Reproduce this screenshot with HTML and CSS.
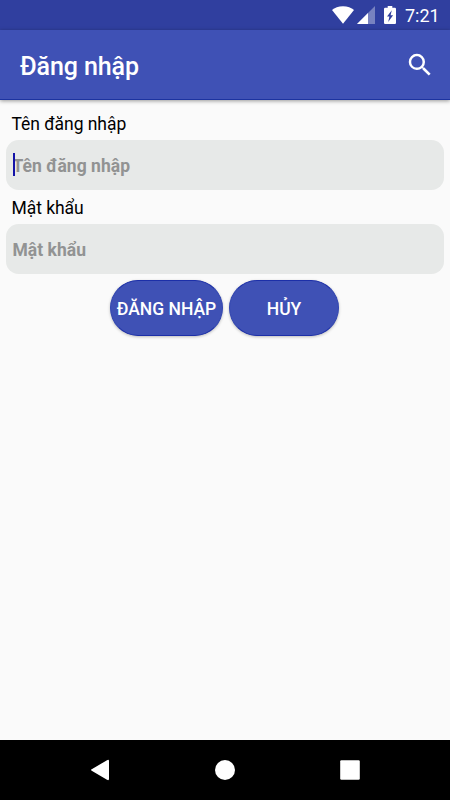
FILE: index.html
```html
<!DOCTYPE html>
<html lang="vi">
<head>
  <meta charset="UTF-8">
  <title>Đăng nhập</title>
  <meta name="viewport" content="width=device-width, initial-scale=1.0">
  <link rel="stylesheet" href="styles.css">
</head>
<body>
  <div class="status-bar">
    <svg class="wifi" width="22" height="18" viewBox="0 0 22 18"><path d="M11 17.8L0 4.1C2.6 1.8 6.500 .3 11 .3s8.400 1.500 11 3.800z" fill="#fff"/></svg>
    <svg class="signal" width="18" height="18" viewBox="0 0 18 18"><path d="M0 18L18 0v18z" fill="#fff" opacity=".35"/><path d="M0 18L11 7v11z" fill="#fff"/></svg>
    <svg class="battery" width="12" height="18" viewBox="0 0 12 18"><path d="M3.700 0h4.600v1.800h2.600q1.100 0 1.100 1.100v14q0 1.100-1.100 1.100H1.100Q0 18 0 16.900v-14q0-1.100 1.100-1.100h2.600z" fill="#fff"/><path d="M7.800 4.300L3 10.600h2.400l-1.200 5.300 4.900-6.600H6.600z" fill="#303f9f"/></svg>
    <span class="time">7:21</span>
  </div>

  <header class="toolbar">
    <h1>Đăng nhập</h1>
    <svg width="30" height="30" viewBox="0 0 24 24"><path fill="#fff" d="M15.500 14h-.79l-.28-.27A6.471 6.471 0 0 0 16 9.500 6.500 6.500 0 1 0 9.500 16c1.610 0 3.090-.59 4.230-1.570l.27.28v.79l5 4.990L20.490 19l-4.990-5zm-6 0C7.010 14 5 11.990 5 9.500S7.010 5 9.500 5 14 7.010 14 9.500 11.990 14 9.500 14z"/></svg>
  </header>

  <form class="login">
    <label for="user">Tên đăng nhập</label>
    <div class="field focused"><input type="text" id="user" placeholder="Tên đăng nhập"></div>
    <label for="pass">Mật khẩu</label>
    <div class="field"><input type="password" id="pass" placeholder="Mật khẩu"></div>
    <div class="buttons">
      <button type="button" class="submit">ĐĂNG NHẬP</button>
      <button type="button" class="cancel">HỦY</button>
    </div>
  </form>

  <nav class="nav-bar">
    <svg width="20" height="22" viewBox="0 0 20 22"><path d="M1.700 10.300L17 1.200q2-1 2 .8v18q0 1.800-2 .8L1.700 11.700q-1.400-.7 0-1.400z" fill="#fff"/></svg>
    <svg width="20" height="20" viewBox="0 0 20 20"><circle cx="10" cy="10" r="10" fill="#fff"/></svg>
    <svg width="20" height="20" viewBox="0 0 20 20"><rect x=".2" y=".2" width="19.600" height="19.600" rx="1.200" fill="#fff"/></svg>
  </nav>
</body>
</html>
```
FILE: styles.css
```css
* { box-sizing: border-box; }
body {
  margin: 0; height: 100vh; background: #fafafa; color: #000;
  font-family: Roboto, sans-serif; font-size: 17.5px;
  display: flex; flex-direction: column; overflow: hidden;
}
svg { display: block; flex: none; }
.status-bar {
  height: 30px; background: #303f9f; color: #fff;
  display: flex; align-items: flex-start; justify-content: flex-end;
  padding: 6px 10px 0 0;
}
.signal { margin-left: 3px; }
.battery { margin-left: 9px; }
.time { width: 35px; margin-left: 9px; font-size: 18px; line-height: 20px; white-space: nowrap; }
.toolbar {
  height: 70px; background: #3f51b5; color: #fff;
  border-bottom: 1px solid #1c33a0;
  box-shadow: 0 1px 4px rgba(0,0,0,0.4);
  display: flex; align-items: center; justify-content: space-between;
  padding: 1px 15px 0 20px;
}
h1 { margin: 0; padding-top: 4px; font-size: 25px; font-weight: 500; line-height: 30px; letter-spacing: -0.1px; }
.login { flex: 1; padding: 6px; }
label { display: block; height: 34px; line-height: 36px; padding-left: 5.5px; letter-spacing: -0.05px; }
.field {
  position: relative; height: 50px; background: #e7e9e8;
  border-radius: 12.5px;
}
.field input {
  width: 100%; height: 100%; padding: 1px 6px 0 6.5px; border: 0; outline: 0;
  background: none; font: bold 17.5px Roboto, sans-serif; letter-spacing: 0.04px;
}
.field input::placeholder { color: #929393; opacity: 1; }
/* text cursor */
.focused::before {
  content: ""; position: absolute; left: 7px; top: 13px;
  width: 2px; height: 23px; background: #1413a8;
}
.buttons { display: flex; justify-content: center; gap: 6px; margin-top: 6px; padding-right: 1px; }
button {
  height: 56px; padding: 1px 0 0; border: 1px solid #1c2fa8; border-radius: 28px;
  border-left-color: #3347b0; border-right-color: #3347b0;
  background: #3f51b5; color: #fff;
  font: 500 17.5px Roboto, sans-serif;
  box-shadow: 0 1px 3px rgba(0,0,0,0.25);
}
.submit { width: 113px; }
.cancel { width: 110px; }
.nav-bar {
  height: 60px; background: #000;
  display: flex; align-items: center; justify-content: space-between;
  padding: 0 90px;
}
```
